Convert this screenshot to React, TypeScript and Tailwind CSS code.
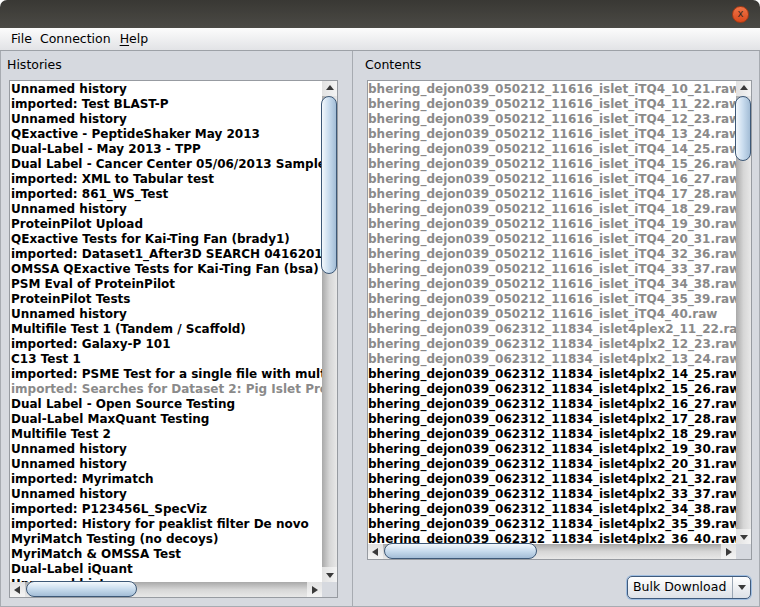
import React from 'react';

type Row = { text: string; dim?: boolean };

const histories: Row[] = [
  { text: 'Unnamed history' },
  { text: 'imported: Test BLAST-P' },
  { text: 'Unnamed history' },
  { text: 'QExactive - PeptideShaker May 2013' },
  { text: 'Dual-Label - May 2013 - TPP' },
  { text: 'Dual Label - Cancer Center 05/06/2013 Samples' },
  { text: 'imported: XML to Tabular test' },
  { text: 'imported: 861_WS_Test' },
  { text: 'Unnamed history' },
  { text: 'ProteinPilot Upload' },
  { text: 'QExactive Tests for Kai-Ting Fan (brady1)' },
  { text: 'imported: Dataset1_After3D SEARCH 04162013' },
  { text: 'OMSSA QExactive Tests for Kai-Ting Fan (bsa)' },
  { text: 'PSM Eval of ProteinPilot' },
  { text: 'ProteinPilot Tests' },
  { text: 'Unnamed history' },
  { text: 'Multifile Test 1 (Tandem / Scaffold)' },
  { text: 'imported: Galaxy-P 101' },
  { text: 'C13 Test 1' },
  { text: 'imported: PSME Test for a single file with multiple' },
  { text: 'imported: Searches for Dataset 2: Pig Islet Proteins', dim: true },
  { text: 'Dual Label - Open Source Testing' },
  { text: 'Dual-Label MaxQuant Testing' },
  { text: 'Multifile Test 2' },
  { text: 'Unnamed history' },
  { text: 'Unnamed history' },
  { text: 'imported: Myrimatch' },
  { text: 'Unnamed history' },
  { text: 'imported: P123456L_SpecViz' },
  { text: 'imported: History for peaklist filter De novo' },
  { text: 'MyriMatch Testing (no decoys)' },
  { text: 'MyriMatch & OMSSA Test' },
  { text: 'Dual-Label iQuant' },
  { text: 'Unnamed history' },
];

const a = 'bhering_dejon039_050212_11616_islet_iTQ4_';
const b = 'bhering_dejon039_062312_11834_islet4plx2_';

const contents: Row[] = [
  ...['10_21', '11_22', '12_23', '13_24', '14_25', '15_26', '16_27', '17_28', '18_29', '19_30', '20_31', '32_36', '33_37', '34_38', '35_39', '40'].map(
    (s) => ({ text: `${a}${s}.raw`, dim: true }),
  ),
  { text: 'bhering_dejon039_062312_11834_islet4plex2_11_22.raw', dim: true },
  { text: `${b}12_23.raw`, dim: true },
  { text: `${b}13_24.raw`, dim: true },
  ...['14_25', '15_26', '16_27', '17_28', '18_29', '19_30', '20_31', '21_32', '33_37', '34_38', '35_39', '36_40'].map(
    (s) => ({ text: `${b}${s}.raw` }),
  ),
];

function Arrow({ dir }: { dir: 'up' | 'down' | 'left' | 'right' }) {
  const pts = {
    up: '0,6 4,1 8,6',
    down: '0,1 8,1 4,6',
    left: '7,0 7,8 1,4',
    right: '1,0 1,8 7,4',
  }[dir];
  const size = dir === 'up' || dir === 'down' ? 'w-2 h-[7px]' : 'w-2 h-2';
  return (
    <svg viewBox={dir === 'up' || dir === 'down' ? '0 0 8 7' : '0 0 8 8'} className={size}>
      <polygon points={pts} fill="#3a3a3a" />
    </svg>
  );
}

function VBar({ thumbTop, thumbH }: { thumbTop: number; thumbH: number }) {
  return (
    <div className="flex flex-col min-h-0">
      <div className="h-[15px] flex items-start justify-center pt-[3px] bg-gradient-to-r from-[#e2e2e2] to-[#f4f4f4]">
        <Arrow dir="up" />
      </div>
      <div className="flex-1 flex flex-col bg-gradient-to-r from-[#a9a9a9] via-[#d6d6d6] to-[#e8e8e8]">
        <div
          className="rounded-[8px] border border-[#3d5877] bg-gradient-to-r from-[#f3f8fc] via-[#c9dcee] to-[#a3bdd6] -ml-[1px]"
          style={{ marginTop: thumbTop, height: thumbH }}
        />
      </div>
      <div className="h-[15px] flex items-end justify-center pb-[3px] bg-gradient-to-r from-[#e2e2e2] to-[#f4f4f4]">
        <Arrow dir="down" />
      </div>
    </div>
  );
}

function HBar({ thumbLeft, thumbW }: { thumbLeft: number; thumbW: number }) {
  return (
    <div className="flex min-w-0">
      <div className="w-[15px] flex items-center justify-start pl-[3px] bg-gradient-to-b from-[#e2e2e2] to-[#f4f4f4]">
        <Arrow dir="left" />
      </div>
      <div className="flex-1 flex bg-gradient-to-b from-[#a9a9a9] via-[#d6d6d6] to-[#e8e8e8]">
        <div
          className="rounded-[8px] border border-[#3d5877] bg-gradient-to-b from-[#f3f8fc] via-[#c9dcee] to-[#a3bdd6] -mt-[1px]"
          style={{ marginLeft: thumbLeft, width: thumbW }}
        />
      </div>
      <div className="w-[15px] flex items-center justify-end pr-[3px] bg-gradient-to-b from-[#e2e2e2] to-[#f4f4f4]">
        <Arrow dir="right" />
      </div>
    </div>
  );
}

function ScrollList({
  rows,
  className,
  textPad,
  v,
  h,
}: {
  rows: Row[];
  className: string;
  textPad: string;
  v: [number, number];
  h: [number, number];
}) {
  return (
    <div className={`border border-[#979ba1] grid grid-cols-[1fr_15px] grid-rows-[1fr_15px] ${className}`}>
      <div className="bg-white overflow-hidden pt-[1px]">
        {rows.map((r, i) => (
          <div
            key={i}
            className={`h-[15px] leading-[15px] whitespace-nowrap font-bold text-[12px] ${textPad} ${
              r.dim ? 'text-[#8a8a8a]' : 'text-black'
            }`}
          >
            {r.text}
          </div>
        ))}
      </div>
      <VBar thumbTop={v[0]} thumbH={v[1]} />
      <HBar thumbLeft={h[0]} thumbW={h[1]} />
      <div className="bg-[#d6d9df]" />
    </div>
  );
}

export default function App() {
  return (
    <div className="w-[760px] h-[607px] bg-white font-['DejaVu_Sans',sans-serif] text-black">
      <div className="w-full h-full flex flex-col rounded-t-[7px] overflow-hidden">
        {/* title bar */}
        <div className="h-[28px] flex items-center justify-end pr-[11px] bg-gradient-to-b from-[#393834] to-[#4b4a45]">
          <div className="w-[17px] h-[17px] rounded-full border border-[#a83a14] bg-gradient-to-b from-[#f07446] to-[#d9481a] flex items-center justify-center text-[10px] leading-none text-[#3b2a22]">
            x
          </div>
        </div>

        {/* menu bar */}
        <div className="h-[23px] flex items-center pl-[11px] gap-[7px] text-[12.5px] bg-gradient-to-b from-[#fcfcfc] to-[#e2e3e6] border-b border-[#9da1a7]">
          <span>File</span>
          <span className="ml-[1px]">Connection</span>
          <span className="ml-[2px]">
            <span className="underline underline-offset-2">H</span>elp
          </span>
        </div>

        {/* panels */}
        <div className="flex-1 flex bg-[#d6d9df] border-x border-b border-[#a7abb1] min-h-0">
          <div className="w-[352px] border-r border-[#a7abb1] flex flex-col pt-[6px] pl-[6px]">
            <div className="h-[15px] leading-[15px] text-[12.5px]">Histories</div>
            <ScrollList
              rows={histories}
              className="mt-[8px] ml-[2px] w-[329px] h-[518px]"
              textPad="pl-[1px]"
              v={[0, 178]}
              h={[1, 111]}
            />
          </div>
          <div className="flex-1 flex flex-col pt-[6px] pl-[12px] pr-[7px]">
            <div className="h-[15px] leading-[15px] text-[12.5px]">Contents</div>
            <ScrollList
              rows={contents}
              className="mt-[8px] ml-[2px] w-[385px] h-[480px]"
              textPad="pl-0"
              v={[0, 65]}
              h={[1, 153]}
            />
            <div className="mt-[16px] flex justify-end pr-[1px]">
              <div className="h-[23px] w-[124px] flex rounded-[5px] border border-[#3f5a7c] shadow-[0_0_0_1px_#9fbde0] bg-gradient-to-b from-[#ffffff] to-[#dde1e7] text-[12.5px]">
                <div className="flex-1 flex items-center pl-[5px]">Bulk Download</div>
                <div className="w-[18px] border-l border-[#9aa6b4] flex items-center justify-center">
                  <Arrow dir="down" />
                </div>
              </div>
            </div>
          </div>
        </div>
      </div>
    </div>
  );
}
